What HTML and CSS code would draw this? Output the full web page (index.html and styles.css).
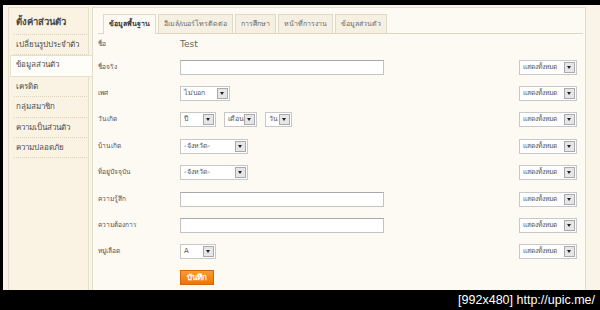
FILE: index.html
```html
<!DOCTYPE html>
<html lang="th">

<head>
	<meta charset="utf-8">
	<title>ตั้งค่าส่วนตัว</title>
	<link rel="stylesheet" href="styles.css">
</head>

<body>
	<div class="frame">
		<div class="screen">
			<aside class="side">
				<h2>ตั้งค่าส่วนตัว</h2>
				<a class="item">เปลี่ยนรูปประจำตัว</a>
				<a class="item active">ข้อมูลส่วนตัว</a>
				<a class="item">เครดิต</a>
				<a class="item">กลุ่มสมาชิก</a>
				<a class="item">ความเป็นส่วนตัว</a>
				<a class="item">ความปลอดภัย</a>
			</aside>

			<main class="panel">
				<nav class="tabs">
					<span class="tab on">ข้อมูลพื้นฐาน</span>
					<span class="tab">อีเมล์/เบอร์โทรติดต่อ</span>
					<span class="tab">การศึกษา</span>
					<span class="tab">หน้าที่การงาน</span>
					<span class="tab">ข้อมูลส่วนตัว</span>
				</nav>

				<div class="row first">
					<label>ชื่อ</label>
					<span class="value">Test</span>
				</div>

				<div class="row">
					<label>ชื่อจริง</label>
					<span class="input"></span>
					<span class="select show">แสดงทั้งหมด<i class="arrow"></i></span>
				</div>

				<div class="row">
					<label>เพศ</label>
					<div class="fields"><span class="select w48">ไม่บอก<i class="arrow"></i></span></div>
					<span class="select show">แสดงทั้งหมด<i class="arrow"></i></span>
				</div>

				<div class="row">
					<label>วันเกิด</label>
					<div class="fields">
						<span class="select w34">ปี<i class="arrow"></i></span>
						<span class="select w33">เดือน<i class="arrow"></i></span>
						<span class="select w26">วัน<i class="arrow"></i></span>
					</div>
					<span class="select show">แสดงทั้งหมด<i class="arrow"></i></span>
				</div>

				<div class="row">
					<label>บ้านเกิด</label>
					<div class="fields"><span class="select w66">-จังหวัด-<i class="arrow"></i></span></div>
					<span class="select show">แสดงทั้งหมด<i class="arrow"></i></span>
				</div>

				<div class="row">
					<label>ที่อยู่ปัจจุบัน</label>
					<div class="fields"><span class="select w66">-จังหวัด-<i class="arrow"></i></span></div>
					<span class="select show">แสดงทั้งหมด<i class="arrow"></i></span>
				</div>

				<div class="row">
					<label>ความรู้สึก</label>
					<span class="input"></span>
					<span class="select show">แสดงทั้งหมด<i class="arrow"></i></span>
				</div>

				<div class="row">
					<label>ความต้องการ</label>
					<span class="input"></span>
					<span class="select show">แสดงทั้งหมด<i class="arrow"></i></span>
				</div>

				<div class="row">
					<label>หมู่เลือด</label>
					<div class="fields"><span class="select w34">A<i class="arrow"></i></span></div>
					<span class="select show">แสดงทั้งหมด<i class="arrow"></i></span>
				</div>

				<div class="actions">
					<button class="save">บันทึก</button>
				</div>
			</main>
		</div>
		<div class="caption">[992x480] http://upic.me/</div>
	</div>
</body>

</html>
```

FILE: styles.css
```css
body {
	margin: 0;
	background: #000;
	font-family: Tahoma, "DejaVu Sans", "Noto Sans", sans-serif;
}

/*____________________Frame____________________*/

.frame {
	width: 600px;
	height: 310px;
	overflow: hidden;
	display: flex;
	flex-direction: column;
}

.screen {
	height: 285px;
	margin: 5px 0 0 3px;
	background: #f9f4e7;
	display: flex;
	align-items: flex-start;
	padding: 2px 14px 0 5px;
	box-sizing: border-box;
	overflow: hidden;
}

.caption {
	height: 20px;
	color: #fff;
	text-align: right;
	padding-right: 5px;
	font-family: "Liberation Sans", sans-serif;
	font-size: 12.5px;
	line-height: 20px;
}

/*____________________Sidebar____________________*/

.side {
	width: 73px;
	height: 300px;
	flex: none;
	background: #faf3e4;
	border: 1px solid #e6dfcb;
	display: flex;
	flex-direction: column;
	padding: 0 1px 0 5px;
}

.side h2 {
	margin: 0;
	height: 26px;
	line-height: 27px;
	font-size: 9.5px;
	font-weight: bold;
	color: #4a4a4a;
	padding-left: 2px;
	border-bottom: 1px dotted #ddd3bd;
}

.item {
	height: 19.4px;
	line-height: 19.4px;
	font-size: 8px;
	color: #4d4d4d;
	padding-left: 2px;
	border-bottom: 1px dotted #ddd3bd;
	white-space: nowrap;
}

.item.active {
	background: #fffdf8;
	border: 1px solid #e6dfcb;
	border-right: none;
	margin: 0 -5px 0 -4px;
	padding-left: 5px;
	line-height: 17.4px;
}

/*____________________Panel____________________*/

.panel {
	flex: 1;
	height: 300px;
	margin-left: 3px;
	background: #fdfaf3;
	border: 1px solid #e3ddca;
	padding: 6px 2px 0 5px;
}

.tabs {
	display: flex;
	gap: 2px;
	padding-left: 5px;
	height: 19px;
	border-bottom: 1px solid #ddd6c3;
}

.tab {
	height: 18px;
	line-height: 18px;
	padding: 0 5px;
	font-size: 7px;
	color: #6b6b6b;
	background: #f6f0e2;
	border: 1px solid #e0d9c6;
	border-bottom: none;
	white-space: nowrap;
}

.tab.on {
	font-weight: bold;
	color: #3b3b3b;
	background: #fdfaf3;
	height: 19px;
	padding: 0 5px;
}

/*____________________Form____________________*/

.row {
	display: grid;
	grid-template-columns: 82px 1fr auto;
	align-items: center;
	height: 26.4px;
	padding-right: 6px;
	font-size: 6.6px;
	color: #555;
}

.row.first {
	height: 20px;
}

.row label {
	margin-top: -2px;
	white-space: nowrap;
}

.value {
	color: #666;
	font-size: 9px;
}

.fields {
	display: flex;
	gap: 8px;
}

.input {
	width: 202px;
	height: 13px;
	background: #fff;
	border: 1px solid #c3c3c3;
	border-top-color: #a9a9a9;
}

.select {
	position: relative;
	display: inline-block;
	height: 13px;
	line-height: 13px;
	background: #fff;
	border: 1px solid #c8c8c8;
	font-size: 7px;
	color: #555;
	padding-left: 3px;
	box-sizing: content-box;
	white-space: nowrap;
	overflow: hidden;
}

.select.show {
	width: 53px;
	font-size: 6.6px;
}

.w48 { width: 45px; }
.w34 { width: 31px; }
.w33 { width: 28px; }
.w26 { width: 22px; }
.w66 { width: 63px; }

.arrow {
	position: absolute;
	right: 1px;
	top: 1px;
	width: 9px;
	height: 9px;
	border: 1px solid #a8aab0;
	background: #e6e6e6;
}

.arrow::after {
	content: "";
	position: absolute;
	left: 2px;
	top: 3px;
	border-left: 2.5px solid transparent;
	border-right: 2.5px solid transparent;
	border-top: 3px solid #222;
}

.actions {
	padding: 0 0 0 82px;
}

.save {
	width: 34px;
	height: 15px;
	padding: 0;
	border: 1px solid #d3650b;
	background: linear-gradient(#fb9a34, #ee7408);
	color: #fff;
	font-family: inherit;
	font-size: 8px;
	font-weight: bold;
}
```
